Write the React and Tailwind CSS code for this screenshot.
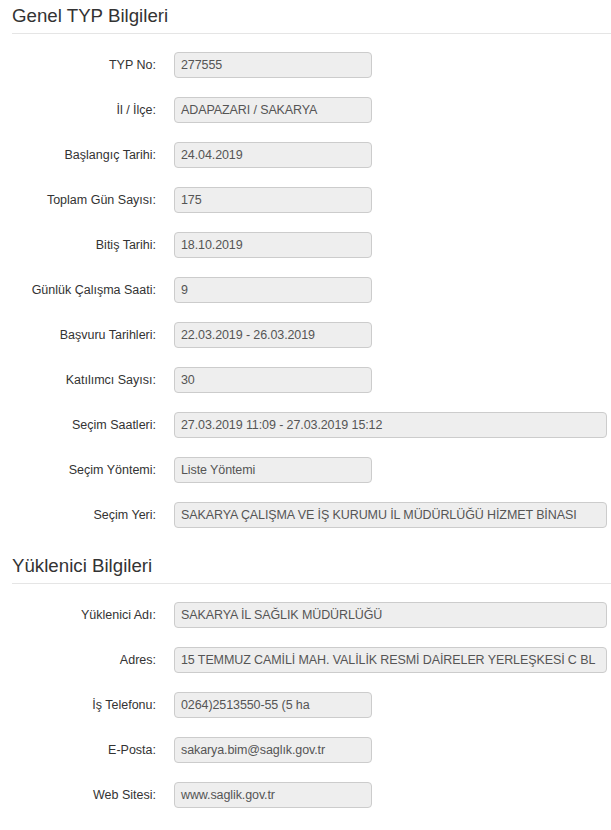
const genel = [
  { label: 'TYP No:', value: '277555' },
  { label: 'İl / İlçe:', value: 'ADAPAZARI / SAKARYA' },
  { label: 'Başlangıç Tarihi:', value: '24.04.2019' },
  { label: 'Toplam Gün Sayısı:', value: '175' },
  { label: 'Bitiş Tarihi:', value: '18.10.2019' },
  { label: 'Günlük Çalışma Saati:', value: '9' },
  { label: 'Başvuru Tarihleri:', value: '22.03.2019 - 26.03.2019' },
  { label: 'Katılımcı Sayısı:', value: '30' },
  { label: 'Seçim Saatleri:', value: '27.03.2019 11:09 - 27.03.2019 15:12', wide: true },
  { label: 'Seçim Yöntemi:', value: 'Liste Yöntemi' },
  { label: 'Seçim Yeri:', value: 'SAKARYA ÇALIŞMA VE İŞ KURUMU İL MÜDÜRLÜĞÜ HİZMET BİNASI', wide: true },
]

const yuklenici = [
  { label: 'Yüklenici Adı:', value: 'SAKARYA İL SAĞLIK MÜDÜRLÜĞÜ', wide: true },
  { label: 'Adres:', value: '15 TEMMUZ CAMİLİ MAH. VALİLİK RESMİ DAİRELER YERLEŞKESİ C BL', wide: true },
  { label: 'İş Telefonu:', value: '0264)2513550-55 (5 ha' },
  { label: 'E-Posta:', value: 'sakarya.bim@saglık.gov.tr' },
  { label: 'Web Sitesi:', value: 'www.saglik.gov.tr' },
]

function Section({ title, rows }) {
  return (
    <div>
      {/* Legend */}
      <h2 className="h-[34px] pt-[5px] border-b border-[#e5e5e5] text-[18.7px] leading-[21px] text-[#333]">
        {title}
      </h2>

      {/* Fields */}
      <div className="mt-[18px] flex flex-col gap-[19px]">
        {rows.map((r) => (
          <div key={r.label} className="flex items-center">
            <label className="w-[144px] shrink-0 text-right text-[12.5px] text-[#333]">{r.label}</label>
            <div
              className={
                'ml-[18px] h-[26px] flex items-center px-[6px] rounded-[4px] border border-[#cccccc] bg-[#eeeeee] text-[12.5px] tracking-[-0.1px] text-[#555] whitespace-nowrap overflow-hidden ' +
                (r.wide ? 'flex-1 mr-[4px]' : 'w-[198px]')
              }
            >
              {r.value}
            </div>
          </div>
        ))}
      </div>
    </div>
  )
}

export default function App() {
  return (
    <div className="w-[611px] min-h-[830px] bg-white pl-[12px] font-['Liberation_Sans',Arial,sans-serif]">
      <Section title="Genel TYP Bilgileri" rows={genel} />
      <div className="mt-[22px]">
        <Section title="Yüklenici Bilgileri" rows={yuklenici} />
      </div>
    </div>
  )
}
